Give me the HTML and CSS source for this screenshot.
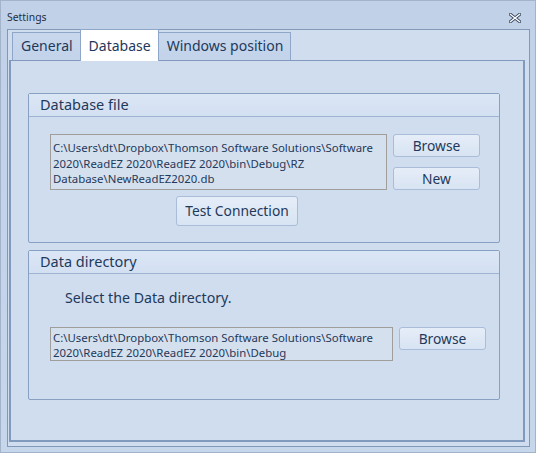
FILE: index.html
```html
<!DOCTYPE html>
<html>
<head>
<meta charset="utf-8">
<link rel="stylesheet" href="styles.css">
</head>
<body>
<div class="window">
  <div class="titlebar">
    <span class="title">Settings</span>
    <svg class="close" width="12" height="10" viewBox="0 0 12 10">
      <path d="M1.5 1.5 L10.5 8.5 M10.5 1.5 L1.5 8.5" stroke="#3a4a60" stroke-width="3.2" stroke-linecap="square" fill="none"/>
      <path d="M1.5 1.5 L10.5 8.5 M10.5 1.5 L1.5 8.5" stroke="#ffffff" stroke-width="1.4" stroke-linecap="square" fill="none"/>
    </svg>
  </div>
  <div class="tabctl">
    <div class="tabs">
      <div class="tab">General</div>
      <div class="tab active">Database</div>
      <div class="tab">Windows position</div>
    </div>
    <div class="page">
      <div class="group g1">
        <div class="ghead">Database file</div>
        <div class="gbody">
          <div class="row">
            <div class="textbox tb1">C:\Users\dt\Dropbox\Thomson Software Solutions\Software 2020\ReadEZ 2020\ReadEZ 2020\bin\Debug\RZ Database\NewReadEZ2020.db</div>
            <div class="btncol">
              <div class="btn">Browse</div>
              <div class="btn">New</div>
            </div>
          </div>
          <div class="btn test">Test Connection</div>
        </div>
      </div>
      <div class="group g2">
        <div class="ghead">Data directory</div>
        <div class="gbody">
          <div class="hint">Select the Data directory.</div>
          <div class="row">
            <div class="textbox tb2">C:\Users\dt\Dropbox\Thomson Software Solutions\Software 2020\ReadEZ 2020\ReadEZ 2020\bin\Debug</div>
            <div class="btn browse2">Browse</div>
          </div>
        </div>
      </div>
    </div>
  </div>
</div>
</body>
</html>
```
FILE: styles.css
```css
* { box-sizing: border-box; }
html, body { margin: 0; padding: 0; }
body {
  font-family: "Noto Sans", "Open Sans", sans-serif;
  color: #1e395b;
}
.window {
  width: 536px;
  height: 453px;
  border: 1px solid #a3b3c9;
  background: linear-gradient(#c0d1e8, #c6d6eb);
  display: flex;
  flex-direction: column;
}
.titlebar {
  height: 28px;
  flex-shrink: 0;
  display: flex;
  align-items: flex-start;
  justify-content: space-between;
  padding: 9px 14px 0 6px;
}
.title {
  font-size: 10.4px;
  line-height: 14px;
  color: #1e2e44;
}
.close { display: block; margin-top: 3px; }
.tabctl {
  margin-left: 6px;
  width: 523px;
  height: 418px;
  border: 1px solid #8298b8;
  background: #d0ddee;
  display: flex;
  flex-direction: column;
}
.tabs {
  height: 30px;
  display: flex;
  align-items: flex-end;
  padding-left: 4px;
}
.tab {
  height: 28px;
  padding: 0 7px 0 8px;
  border: 1px solid #8ea6c8;
  border-bottom: none;
  background: linear-gradient(#c8d7ec, #c2d3ea);
  font-size: 14px;
  line-height: 25px;
  color: #1e395b;
  margin-right: -1px;
}
.tab.active {
  background: #ffffff;
  line-height: 31px;
  position: relative;
  z-index: 1;
  margin-bottom: -1px;
  height: 32px;
  flex-shrink: 0;
}
.page {
  margin-left: 1px;
  width: 516px;
  height: 382px;
  border: 2px solid #8199bc;
  border-top-width: 1px;
  background: #d0ddee;
  padding: 32px 0 0 17px;
}
.group {
  width: 472px;
  height: 150px;
  border: 1px solid #88a0c2;
  border-radius: 2px;
  display: flex;
  flex-direction: column;
}
.g2 { margin-top: 7px; }
.ghead {
  height: 23px;
  flex-shrink: 0;
  border-bottom: 1px solid #9fb4d2;
  background: linear-gradient(#dbe6f5, #d3e0f2);
  padding-left: 11px;
  font-size: 14.5px;
  line-height: 21px;
}
.gbody {
  padding: 17px 0 0 21px;
}
.g2 .gbody { padding-top: 14px; }
.row {
  display: flex;
  align-items: flex-start;
}
.textbox {
  border: 1px solid #a09e9a;
  background: #d5e0ee;
  font-size: 11.4px;
  line-height: 15.5px;
  padding: 5px 0 0 2px;
  color: #1e395b;
}
.tb1 { width: 337px; height: 56px; }
.tb2 { width: 343px; height: 34px; padding-top: 2px; line-height: 15px; }
.btncol {
  display: flex;
  flex-direction: column;
  gap: 10px;
  margin-left: 6px;
}
.btn {
  width: 87px;
  height: 23px;
  border: 1px solid #a9bcd8;
  border-radius: 3px;
  background: linear-gradient(#e5edf8, #d8e4f3);
  font-size: 13.8px;
  line-height: 22px;
  text-align: center;
  color: #1e395b;
}
.test {
  width: 122px;
  height: 30px;
  line-height: 28px;
  margin: 6px 0 0 126px;
}
.hint {
  font-size: 14.2px;
  padding: 0 0 0 15px;
  height: 20px;
  line-height: 20px;
  margin-bottom: 19px;
}
.browse2 { margin-left: 6px; width: 87px; }
```
